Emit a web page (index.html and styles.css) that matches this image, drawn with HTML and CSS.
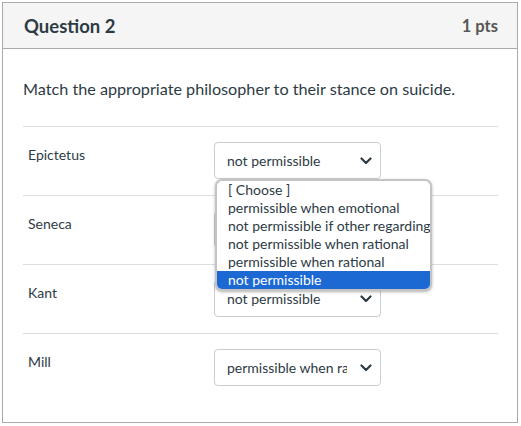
FILE: index.html
```html
<!DOCTYPE html>
<html>
<head>
<meta charset="utf-8">
<link rel="stylesheet" href="styles.css">
</head>
<body>
<div class="quiz">
  <div class="quiz-header">
    <h2 class="quiz-title">Question 2</h2>
    <span class="quiz-pts">1 pts</span>
  </div>
  <div class="quiz-body">
    <p class="quiz-text">Match the appropriate philosopher to their stance on suicide.</p>
    <div class="match-list">
      <div class="match-row">
        <div class="match-label">Epictetus</div>
        <div class="select-wrap">
          <div class="select"><span class="select-text">not permissible</span><svg class="chev" width="12" height="8" viewBox="0 0 12 8"><path d="M1.5 1.5 L6 6 L10.5 1.5" fill="none" stroke="#2d3b45" stroke-width="2.2" stroke-linecap="round" stroke-linejoin="round"/></svg></div>
          <ul class="dropdown">
            <li>[ Choose ]</li>
            <li>permissible when emotional</li>
            <li>not permissible if other regarding</li>
            <li>not permissible when rational</li>
            <li>permissible when rational</li>
            <li class="selected">not permissible</li>
          </ul>
        </div>
      </div>
      <div class="match-row">
        <div class="match-label">Seneca</div>
        <div class="select-wrap">
          <div class="select"><span class="select-text">[ Choose ]</span><svg class="chev" width="12" height="8" viewBox="0 0 12 8"><path d="M1.5 1.5 L6 6 L10.5 1.5" fill="none" stroke="#2d3b45" stroke-width="2.2" stroke-linecap="round" stroke-linejoin="round"/></svg></div>
        </div>
      </div>
      <div class="match-row">
        <div class="match-label">Kant</div>
        <div class="select-wrap">
          <div class="select"><span class="select-text">not permissible</span><svg class="chev" width="12" height="8" viewBox="0 0 12 8"><path d="M1.5 1.5 L6 6 L10.5 1.5" fill="none" stroke="#2d3b45" stroke-width="2.2" stroke-linecap="round" stroke-linejoin="round"/></svg></div>
        </div>
      </div>
      <div class="match-row">
        <div class="match-label">Mill</div>
        <div class="select-wrap">
          <div class="select"><span class="select-text">permissible when rational</span><svg class="chev" width="12" height="8" viewBox="0 0 12 8"><path d="M1.5 1.5 L6 6 L10.5 1.5" fill="none" stroke="#2d3b45" stroke-width="2.2" stroke-linecap="round" stroke-linejoin="round"/></svg></div>
        </div>
      </div>
    </div>
  </div>
</div>
</body>
</html>
```

FILE: styles.css
```css
* { box-sizing: border-box; }
html, body { margin: 0; padding: 0; background: #fff; }
body {
  padding: 2px 4px 4px 2px;
  font-family: Lato, "Liberation Sans", sans-serif;
  color: #2d3b45;
}
.quiz {
  border: 1px solid #aaaaaa;
  height: 421px;
  width: 516px;
}
.quiz-header {
  background: #f5f5f5;
  border-bottom: 1px solid #aaaaaa;
  height: 46px;
  display: flex;
  align-items: center;
  justify-content: space-between;
  padding: 0 19px 0 21px;
}
.quiz-title {
  margin: 0;
  font-size: 18.5px;
  font-weight: 700;
  color: #2d3b45;
}
.quiz-pts {
  font-size: 16.5px;
  font-weight: 700;
  color: #555555;
}
.quiz-body {
  padding: 0 19px 0 20px;
}
.quiz-text {
  margin: 0;
  padding: 30px 0 27px;
  font-size: 16.2px;
  line-height: 20px;
}
.match-list {
  border-top: 1px solid #dcdfe2;
}
.match-row {
  display: flex;
  height: 69px;
  border-bottom: 1px solid #dcdfe2;
  padding-top: 15px;
}
.match-row:last-child { border-bottom: none; }
.match-label {
  width: 191px;
  padding: 4px 0 0 5px;
  font-size: 14px;
  line-height: 18px;
}
.select-wrap {
  position: relative;
  width: 167px;
}
.select {
  display: flex;
  align-items: center;
  height: 37px;
  border: 1px solid #c7cdd1;
  border-radius: 4px;
  background: #fff;
  padding: 0 8px 0 12px;
  font-size: 14px;
}
.select-text {
  flex: 1;
  overflow: hidden;
  white-space: nowrap;
  margin-right: 13px;
}
.chev { flex: none; }
.dropdown {
  position: absolute;
  left: 1px;
  top: 37px;
  width: 217px;
  margin: 0;
  padding: 0;
  list-style: none;
  background: #fff;
  border: 2px solid #c4c4c4;
  border-radius: 7px;
  box-shadow: 0 1px 3px rgba(0,0,0,0.3);
  overflow: hidden;
  z-index: 10;
  font-size: 14px;
}
.dropdown li {
  height: 18px;
  line-height: 17px;
  padding-left: 11px;
  white-space: nowrap;
  color: #2d3b45;
}
.dropdown li.selected {
  background: #1c69d3;
  color: #fff;
}
```
